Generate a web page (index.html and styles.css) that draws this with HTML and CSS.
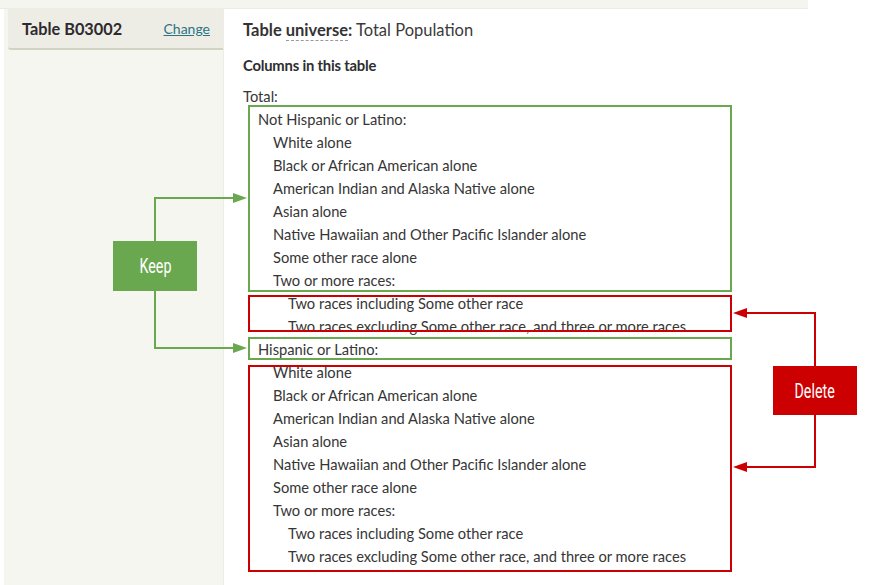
FILE: index.html
```html
<!DOCTYPE html>
<html>
<head>
<meta charset="utf-8">
<link rel="stylesheet" href="styles.css">
</head>
<body>
<div class="topbar"></div>
<div class="layout">
  <aside class="sidebar">
    <div class="sidebar-head">
      <span class="table-id">Table B03002</span>
      <a class="change" href="#">Change</a>
    </div>
  </aside>
  <main class="main">
    <p class="universe"><b>Table <span class="dotted">universe</span>:</b> Total Population</p>
    <h3 class="cols-title">Columns in this table</h3>
    <ul class="cols">
      <li class="l0">Total:</li>
      <li class="l1">Not Hispanic or Latino:</li>
      <li class="l2">White alone</li>
      <li class="l2">Black or African American alone</li>
      <li class="l2">American Indian and Alaska Native alone</li>
      <li class="l2">Asian alone</li>
      <li class="l2">Native Hawaiian and Other Pacific Islander alone</li>
      <li class="l2">Some other race alone</li>
      <li class="l2">Two or more races:</li>
      <li class="l3">Two races including Some other race</li>
      <li class="l3">Two races excluding Some other race, and three or more races</li>
      <li class="l1">Hispanic or Latino:</li>
      <li class="l2">White alone</li>
      <li class="l2">Black or African American alone</li>
      <li class="l2">American Indian and Alaska Native alone</li>
      <li class="l2">Asian alone</li>
      <li class="l2">Native Hawaiian and Other Pacific Islander alone</li>
      <li class="l2">Some other race alone</li>
      <li class="l2">Two or more races:</li>
      <li class="l3">Two races including Some other race</li>
      <li class="l3">Two races excluding Some other race, and three or more races</li>
    </ul>
  </main>
</div>

<svg class="annot" width="884" height="585" viewBox="0 0 884 585">
  <g fill="none" stroke-width="2">
    <rect x="249" y="106" width="482" height="185" stroke="#6aa84f"/>
    <rect x="249" y="296" width="482" height="35" stroke="#cc0000"/>
    <rect x="249" y="338" width="482" height="21" stroke="#6aa84f"/>
    <rect x="249" y="366" width="482" height="205" stroke="#cc0000"/>
    <polyline points="155,242 155,198 236,198" stroke="#6aa84f"/>
    <polyline points="155,290 155,348 236,348" stroke="#6aa84f"/>
    <polyline points="815,367 815,313 744,313" stroke="#cc0000"/>
    <polyline points="815,413 815,467 744,467" stroke="#cc0000"/>
  </g>
  <polygon points="233,193 247,198 233,203" fill="#6aa84f"/>
  <polygon points="233,343 247,348 233,353" fill="#6aa84f"/>
  <polygon points="747,308 733,313 747,318" fill="#cc0000"/>
  <polygon points="747,462 733,467 747,472" fill="#cc0000"/>
</svg>
<div class="tag keep"><span>Keep</span></div>
<div class="tag delete"><span>Delete</span></div>
</body>
</html>
```

FILE: styles.css
```css
html, body {
  margin: 0;
  padding: 0;
  background: #ffffff;
}
body {
  width: 884px;
  height: 585px;
  overflow: hidden;
  position: relative;
  font-family: Lato, "Open Sans", sans-serif;
  color: #333333;
}
.topbar {
  width: 808px;
  height: 8px;
  background: #f5f5f0;
  border-bottom: 1px solid #ebebe4;
}
.layout {
  display: flex;
  height: 576px;
}
.sidebar {
  margin-left: 4px;
  width: 219px;
  background: #f6f6f1;
  padding-left: 4px;
  box-sizing: border-box;
}
.sidebar-head {
  height: 40px;
  margin-top: -1px;
  background: #ededE6;
  border-bottom: 2px solid #d3d3c3;
  border-bottom-left-radius: 3px;
  display: flex;
  align-items: center;
  justify-content: space-between;
  padding: 0 13px 0 14px;
}
.table-id {
  font-weight: 700;
  font-size: 16.3px;
  color: #2e2a2e;
}
.change {
  font-size: 14px;
  color: #2b7484;
  text-decoration: underline;
}
.main {
  flex: 1;
  padding: 10px 0 0 19px;
  border-left: 1px solid #ececE6;
}
.universe {
  margin: 0;
  font-size: 16.5px;
  line-height: 23px;
  color: #3a3a3a;
}
.universe b {
  font-weight: 700;
  color: #333;
}
.dotted {
  border-bottom: 1px dashed #999;
}
.cols-title {
  margin: 12px 0 0;
  font-size: 14.8px;
  line-height: 23px;
  font-weight: 700;
  color: #2e2e2e;
  letter-spacing: -0.2px;
}
.cols {
  list-style: none;
  margin: 8px 0 0;
  padding: 0;
  font-size: 14.7px;
  line-height: 23px;
  color: #363636;
}
.l1 { padding-left: 15px; }
.l2 { padding-left: 30px; }
.l3 { padding-left: 45px; }
.annot {
  position: absolute;
  left: 0;
  top: 0;
}
.tag {
  position: absolute;
  display: flex;
  align-items: center;
  justify-content: center;
  color: #ffffff;
  font-family: Roboto, sans-serif;
  font-size: 21px;
}
.tag span {
  display: inline-block;
  transform: scaleX(0.68);
}
.keep {
  left: 113px;
  top: 241px;
  width: 84px;
  height: 50px;
  background: #6aa84f;
}
.delete {
  left: 773px;
  top: 366px;
  width: 84px;
  height: 49px;
  background: #cc0000;
}
```
